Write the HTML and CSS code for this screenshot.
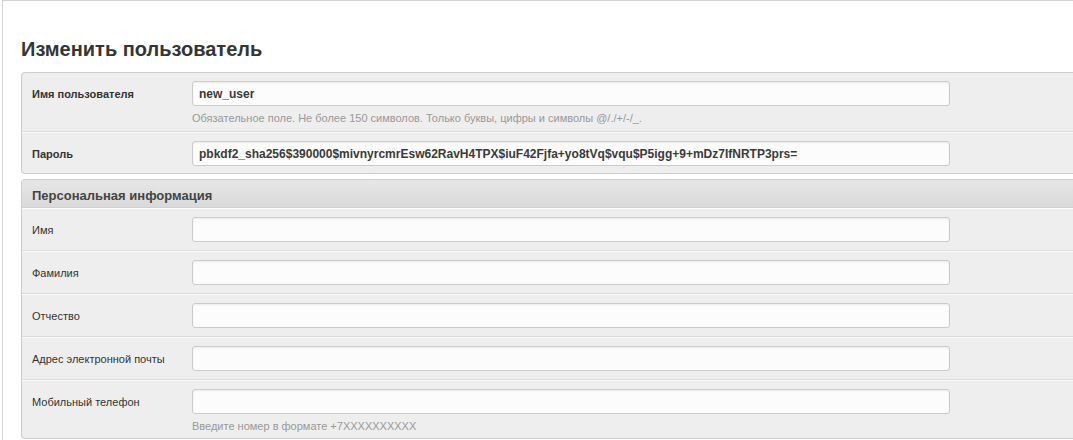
FILE: index.html
```html
<!DOCTYPE html>
<html lang="ru">
<head>
<meta charset="utf-8">
<title>Изменить пользователь</title>
<link rel="stylesheet" href="styles.css">
</head>
<body>
<div class="content">
  <h2 class="page-title">Изменить пользователь</h2>

  <form class="change-form">
    <fieldset class="module">
      <div class="form-row has-help">
        <label class="required">Имя пользователя</label>
        <div class="field">
          <input class="input" type="text" value="new_user">
          <div class="help">Обязательное поле. Не более 150 символов. Только буквы, цифры и символы @/./+/-/_.</div>
        </div>
      </div>
      <div class="form-row">
        <label class="required">Пароль</label>
        <div class="field">
          <input class="input" type="text" value="pbkdf2_sha256$390000$mivnyrcmrEsw62RavH4TPX$iuF42Fjfa+yo8tVq$vqu$P5igg+9+mDz7IfNRTP3prs=">
        </div>
      </div>
    </fieldset>

    <fieldset class="module">
      <h3 class="module-title">Персональная информация</h3>
      <div class="form-row">
        <label>Имя</label>
        <div class="field"><input class="input" type="text"></div>
      </div>
      <div class="form-row">
        <label>Фамилия</label>
        <div class="field"><input class="input" type="text"></div>
      </div>
      <div class="form-row">
        <label>Отчество</label>
        <div class="field"><input class="input" type="text"></div>
      </div>
      <div class="form-row">
        <label>Адрес электронной почты</label>
        <div class="field"><input class="input" type="text"></div>
      </div>
      <div class="form-row has-help">
        <label>Мобильный телефон</label>
        <div class="field">
          <input class="input" type="text">
          <div class="help">Введите номер в формате +7XXXXXXXXXX</div>
        </div>
      </div>
    </fieldset>
  </form>
</div>
</body>
</html>
```

FILE: styles.css
```css
html, body {
  margin: 0;
  padding: 0;
  background: #fff;
  overflow: hidden;
}

body {
  font-family: "Liberation Sans", Arial, Helvetica, sans-serif;
  font-size: 11px;
  color: #333;
}

.content {
  margin-left: 2px;
  border-top: 1px solid #d2d2d2;
  border-left: 1px solid #d2d2d2;
  padding-left: 18px;
  min-height: 460px;
}

.page-title {
  margin: 36px 0 11px;
  font-size: 20px;
  line-height: 24px;
  font-weight: bold;
  color: #353535;
}

/* the form runs on past the right edge of the window */
.change-form {
  margin-right: -60px;
}

.module {
  margin: 0 0 5px;
  padding: 0;
  border: 1px solid #cdcdcd;
  border-radius: 4px;
  background: #eee;
  min-width: 0;
}

.module-title {
  margin: 0;
  padding: 7px 10px 3px;
  font-size: 13px;
  line-height: 17px;
  font-weight: bold;
  color: #444;
  background: linear-gradient(#e7e7e7, #d9d9d9);
  border-bottom: 1px solid #d0d0d0;
  border-radius: 3px 3px 0 0;
}

.form-row {
  display: grid;
  grid-template-columns: 160px 758px;
  align-items: start;
  padding: 8px 10px;
  border-top: 1px solid #fbfbfb;
  border-bottom: 1px solid #dcdcdc;
}

.form-row.has-help {
  padding-bottom: 6px;
}

.module > .form-row:first-child {
  border-top: 0;
}

.module > .form-row:last-child {
  border-bottom: 0;
  padding-bottom: 7px;
}

.module > .form-row.has-help:last-child {
  padding-bottom: 5px;
}

.form-row label {
  padding-top: 2px;
  line-height: 23px;
  font-size: 11px;
  color: #333;
}

.form-row label.required {
  font-weight: bold;
}

.input {
  display: block;
  box-sizing: border-box;
  width: 758px;
  height: 25px;
  margin: 0;
  padding: 0 6px;
  border: 1px solid #cbcbcb;
  border-radius: 3px;
  background: #fcfcfc;
  box-shadow: inset 0 1px 2px rgba(0, 0, 0, 0.07);
  font-family: "Liberation Sans", Arial, Helvetica, sans-serif;
  font-size: 12px;
  font-weight: bold;
  color: #3a3a3a;
  outline: none;
}

.help {
  margin-top: 5px;
  line-height: 14px;
  font-size: 11px;
  color: #999;
}
```
